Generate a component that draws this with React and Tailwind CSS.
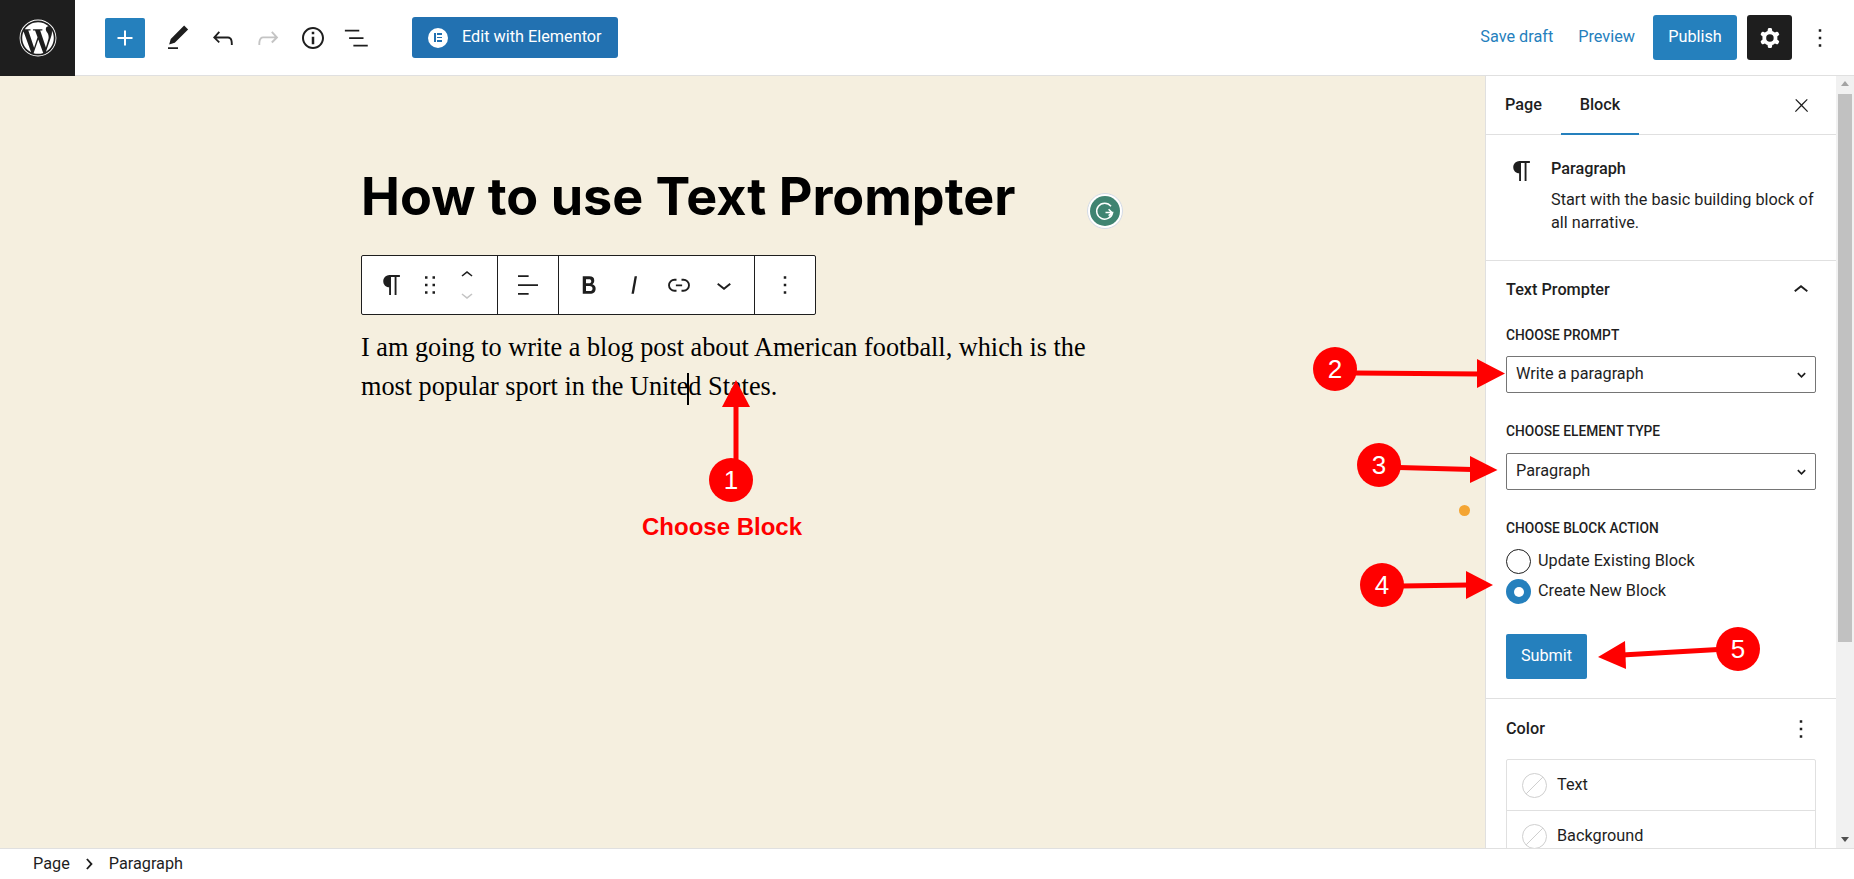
import React from "react";
import { FaWordpress } from "react-icons/fa";

const P = {
  plus: "M18 11.2h-5.2V6h-1.6v5.2H6v1.6h5.2V18h1.6v-5.2H18z",
  edit: "M20.1 5.1L16.9 2 6.2 12.7l-1.3 4.4 4.5-1.3L20.1 5.1zM4 20.8h8v-1.5H4v1.5z",
  undo: "M18.3 11.7c-.6-.6-1.4-.9-2.3-.9H6.7l2.9-3.3-1.1-1-4.5 5L8.5 16l1-1-2.7-2.7H16c.5 0 .9.2 1.3.5 1 1 1 3.4 1 4.5v.3h1.5v-.2c0-1.5 0-4.3-1.5-5.7z",
  redo: "M15.6 6.5l-1.1 1 2.9 3.3H8c-.9 0-1.7.3-2.3.9-1.4 1.5-1.4 4.2-1.4 5.6v.2h1.5v-.3c0-1.1 0-3.5 1-4.5.3-.3.7-.5 1.3-.5h9.2L14.5 15l1.1 1.1 4.6-4.6-4.6-5z",
  info: "M12 3.2c-4.8 0-8.8 3.9-8.8 8.8 0 4.8 3.9 8.8 8.8 8.8 4.8 0 8.8-3.9 8.8-8.8 0-4.8-4-8.8-8.8-8.8zm0 16c-4 0-7.2-3.3-7.2-7.2C4.8 8 8 4.8 12 4.8s7.2 3.3 7.2 7.2c0 4-3.2 7.2-7.2 7.2zM11 17h2v-6h-2v6zm0-8h2V7h-2v2z",
  list: "M1.5 5.3h11.5v1.5H1.5zM4.9 11.3h11.5v1.5H4.9zM8.3 17.3h11.5v1.5H8.3z",
  cog: "M10.289 4.836A1 1 0 0111.275 4h1.306a1 1 0 01.987.836l.244 1.466c.787.26 1.503.679 2.108 1.218l1.393-.522a1 1 0 011.216.437l.653 1.13a1 1 0 01-.23 1.273l-1.148.944a6.025 6.025 0 010 2.435l1.149.946a1 1 0 01.23 1.272l-.653 1.13a1 1 0 01-1.216.437l-1.394-.522c-.605.54-1.32.958-2.108 1.218l-.244 1.466a1 1 0 01-.987.836h-1.306a1 1 0 01-.986-.836l-.244-1.466a5.995 5.995 0 01-2.108-1.218l-1.394.522a1 1 0 01-1.217-.436l-.653-1.131a1 1 0 01.23-1.272l1.149-.946a6.026 6.026 0 010-2.435l-1.148-.944a1 1 0 01-.23-1.272l.653-1.131a1 1 0 011.217-.437l1.393.522a5.994 5.994 0 012.108-1.218l.244-1.466zM14.929 12a3 3 0 11-6 0 3 3 0 016 0z",
  more: "M13 19h-2v-2h2v2zm0-6h-2v-2h2v2zm0-6h-2V5h2v2z",
  close: "M13 11.8l6.1-6.3-1-1-6.1 6.2-6.1-6.2-1 1 6.1 6.3-6.5 6.7 1 1 6.5-6.6 6.5 6.6 1-1z",
  para: "M18.3 4H9.9v-.1l-.9.2c-2.3.4-4 2.4-4 4.8s1.7 4.4 4 4.8l.7.1V20h1.5V5.5h2.9V20h1.5V5.5h2.7V4z",
  drag: "M8 7h2V5H8v2zm0 6h2v-2H8v2zm0 6h2v-2H8v2zm6-14v2h2V5h-2zm0 8h2v-2h-2v2zm0 6h2v-2h-2v2z",
  up: "M6.5 12.4L12 8l5.5 4.4-.9 1.2L12 10l-4.5 3.6-1-1.2z",
  down: "M17.5 11.6L12 16l-5.5-4.4.9-1.2L12 14l4.5-3.6 1 1.2z",
  align: "M4 19.8h8.5v-1.5H4v1.5zm8.5-15.6H4v1.5h8.5V4.2zM4 12.8h16v-1.5H4v1.5z",
  bold: "M14.7 11.3c1-.6 1.5-1.6 1.5-3 0-2.3-1.3-3.4-4-3.4H7v14h5.8c1.4 0 2.5-.3 3.3-1 .8-.7 1.2-1.7 1.2-2.9.1-1.9-.8-3.1-2.6-3.7zm-5.1-4h2.3c.6 0 1.1.1 1.4.4.3.3.5.7.5 1.2s-.2 1-.5 1.2c-.3.3-.8.4-1.4.4H9.6V7.3zm4.6 9c-.4.3-1 .4-1.7.4H9.6v-3.9h2.9c.7 0 1.3.2 1.7.5.4.3.6.8.6 1.5s-.2 1.2-.6 1.5z",
  italic: "M12.5 5L10 19h1.9l2.5-14z",
  link: "M10 17.389H8.444A5.194 5.194 0 1 1 8.444 7H10v1.5H8.444a3.694 3.694 0 0 0 0 7.389H10v1.5ZM14 7h1.556a5.194 5.194 0 0 1 0 10.39H14v-1.5h1.556a3.694 3.694 0 0 0 0-7.39H14V7Zm-4.5 6h5v-1.5h-5V13Z",
  right: "M9.6 6.4 8.2 7.6 12.2 12l-4 4.4 1.4 1.2L14.7 12z",
};

function I({ d, className = "w-[30px] h-[30px]", evenodd }) {
  return (
    <svg viewBox="0 0 24 24" className={`${className} shrink-0 fill-current`}>
      <path d={d} fillRule={evenodd ? "evenodd" : undefined} clipRule={evenodd ? "evenodd" : undefined} />
    </svg>
  );
}

function ToolBtn({ d, muted, className = "" }) {
  return (
    <button className={`w-[45px] h-[45px] flex items-center justify-center ${muted ? "text-[#c4c4c4]" : "text-[#1e1e1e]"} ${className}`}>
      <I d={d} />
    </button>
  );
}

function TopBar() {
  return (
    <header className="h-[76px] shrink-0 flex items-center bg-white border-b border-[#e0e0e0]">
      <div className="w-[75px] h-[76px] -mb-px bg-[#1e1e1e] flex items-center justify-center text-white shrink-0">
        <FaWordpress className="w-[38px] h-[38px]" />
      </div>
      <div className="flex items-center ml-[30px]">
        <button className="w-[40px] h-[40px] rounded-[2px] bg-[#2580bd] text-white flex items-center justify-center">
          <I d={P.plus} />
        </button>
        <div className="flex items-center ml-[10px]">
          <ToolBtn d={P.edit} />
          <ToolBtn d={P.undo} />
          <ToolBtn d={P.redo} muted />
          <ToolBtn d={P.info} />
          <ToolBtn d={P.list} />
        </div>
        <button className="ml-[32px] w-[206px] h-[41px] rounded-[3px] bg-[#2271b1] text-white flex items-center pl-[16px] text-[16.25px]">
          <span className="w-[20px] h-[20px] rounded-full bg-white flex items-center justify-center gap-[1.5px] mr-[14px]">
            <span className="w-[2px] h-[9px] bg-[#2271b1]" />
            <span className="flex flex-col justify-between h-[9px] w-[5px]">
              <span className="h-[1.6px] bg-[#2271b1]" />
              <span className="h-[1.6px] bg-[#2271b1]" />
              <span className="h-[1.6px] bg-[#2271b1]" />
            </span>
          </span>
          Edit with Elementor
        </button>
      </div>
      <div className="ml-auto flex items-center pr-[12px] text-[16.25px]">
        <button className="text-[#2580bd]">Save draft</button>
        <button className="text-[#2580bd] ml-[25px]">Preview</button>
        <button className="ml-[18px] w-[84px] h-[45px] rounded-[3px] bg-[#2580bd] text-white">Publish</button>
        <button className="ml-[10px] w-[45px] h-[45px] rounded-[3px] bg-[#1e1e1e] text-white flex items-center justify-center">
          <I d={P.cog} evenodd />
        </button>
        <button className="ml-[5px] w-[45px] h-[45px] flex items-center justify-center text-[#1e1e1e]">
          <I d={P.more} />
        </button>
      </div>
    </header>
  );
}

function BlockToolbar() {
  return (
    <div className="mt-[23px] w-[455px] h-[60px] flex bg-white border border-[#1e1e1e] rounded-[2px] text-[#1e1e1e]">
      <div className="flex items-center w-[136px] pl-[7px] border-r border-[#1e1e1e]">
        <ToolBtn d={P.para} />
        <I d={P.drag} className="w-[30px] h-[30px] ml-[1px]" />
        <div className="ml-[7px] w-[30px] flex flex-col items-center">
          <I d={P.up} className="w-[30px] h-[24px]" />
          <span className="text-[#c4c4c4] -mt-[4px]"><I d={P.down} className="w-[30px] h-[24px]" /></span>
        </div>
      </div>
      <div className="flex items-center justify-center w-[61px] border-r border-[#1e1e1e]">
        <I d={P.align} />
      </div>
      <div className="flex items-center w-[196px] pl-[7px] border-r border-[#1e1e1e]">
        <ToolBtn d={P.bold} />
        <ToolBtn d={P.italic} />
        <ToolBtn d={P.link} />
        <ToolBtn d={P.down} />
      </div>
      <div className="flex items-center justify-center flex-1">
        <I d={P.more} />
      </div>
    </div>
  );
}

function Canvas() {
  return (
    <main className="relative flex-1 bg-[#f5efdf] min-w-0">
      <div className="w-[763px] mx-auto pt-[86px]">
        <h1 className="text-[52.1px] leading-[70px] font-bold text-black [font-family:Inter,sans-serif]">How to use Text Prompter</h1>
        <BlockToolbar />
        <p className="mt-[13px] w-[740px] text-[26.25px] leading-[39px] text-black [font-family:'Liberation_Serif',serif]">
          I am going to write a blog post about American football, which is the most popular sport in the Unite
          <span className="inline-block w-[2px] h-[32px] -my-[6px] align-middle bg-black -mx-[1px]" />
          d States.
        </p>
      </div>
      <div className="absolute left-[1087px] top-[117px] w-[36px] h-[36px] rounded-full bg-white border border-[#d5dbe6] flex items-center justify-center">
        <svg viewBox="0 0 30 30" className="w-[30px] h-[30px]">
          <circle cx="15" cy="15" r="15" fill="#3f8471" />
          <path d="M21 10.2A8 8 0 1 0 22.6 16.5H15.5M18.6 13.2l3.6 3.4-3.6 3" fill="none" stroke="#fff" strokeWidth="1.5" />
        </svg>
      </div>
      <div className="absolute left-[1459px] top-[429px] w-[11px] h-[11px] rounded-full bg-[#f4a533]" />
    </main>
  );
}

function Label({ children, className = "" }) {
  return <div className={`text-[13.75px] leading-[18px] font-medium uppercase text-[#1e1e1e] ${className}`}>{children}</div>;
}

function Select({ value, className = "mt-[12px]" }) {
  return (
    <div className={`relative w-[310px] h-[37px] ${className}`}>
      <select defaultValue={value} className="w-full h-full appearance-none rounded-[2px] border border-[#757575] bg-white pl-[9px] text-[16.25px] text-[#1e1e1e] [font-family:Roboto,sans-serif]">
        <option>{value}</option>
      </select>
      <svg viewBox="0 0 12 12" className="absolute right-[9px] top-[13px] w-[11px] h-[11px] fill-none stroke-[#1e1e1e] stroke-[1.8] pointer-events-none">
        <path d="M2 4.5 6 8.5 10 4.5" />
      </svg>
    </div>
  );
}

function Radio({ label, checked }) {
  return (
    <label className="flex items-center h-[25px] text-[16.25px] text-[#1e1e1e]">
      {checked ? (
        <span className="w-[25px] h-[25px] rounded-full bg-[#2580bd] flex items-center justify-center">
          <span className="w-[10px] h-[10px] rounded-full bg-white" />
        </span>
      ) : (
        <span className="w-[25px] h-[25px] rounded-full border border-[#1e1e1e] bg-white" />
      )}
      <span className="ml-[7px]">{label}</span>
    </label>
  );
}

function ColorRow({ label, last }) {
  return (
    <div className={`flex items-center h-[51px] pl-[15px] ${last ? "" : "border-b border-[#e0e0e0]"}`}>
      <svg viewBox="0 0 25 25" className="w-[25px] h-[25px] shrink-0">
        <circle cx="12.5" cy="12.5" r="12" fill="#fff" stroke="#cfcfcf" />
        <path d="M4.2 20.8 20.8 4.2" stroke="#cfcfcf" />
      </svg>
      <span className="ml-[10px] text-[16.25px] text-[#1e1e1e]">{label}</span>
    </div>
  );
}

function Sidebar() {
  return (
    <aside className="w-[369px] shrink-0 flex overflow-hidden bg-white">
      <div className="w-[351px] border-l border-[#e0e0e0] flex flex-col overflow-hidden text-[#1e1e1e]">
        <div className="h-[59px] shrink-0 flex items-stretch border-b border-[#e0e0e0] relative">
          <button className="w-[75px] text-[16.25px] font-medium">Page</button>
          <button className="w-[78px] text-[16.25px] font-medium relative">
            Block
            <span className="absolute left-0 right-0 -bottom-px h-[2px] bg-[#2580bd]" />
          </button>
          <div className="ml-auto mr-[24px] self-center"><I d={P.close} className="w-[21px] h-[21px]" /></div>
        </div>
        <div className="h-[126px] shrink-0 flex border-b border-[#e0e0e0] pt-[20px] pl-[21px]">
          <I d={P.para} className="w-[30px] h-[30px] mt-[1px]" />
          <div className="ml-[14px] w-[270px]">
            <div className="text-[16.25px] leading-[22px] font-medium mt-[3px]">Paragraph</div>
            <div className="text-[16.25px] leading-[23px] mt-[8px]">Start with the basic building block of all narrative.</div>
          </div>
        </div>
        <section className="shrink-0 border-b border-[#e0e0e0] px-[20px] pb-[19px]">
          <div className="flex items-center justify-between h-[58px]">
            <span className="text-[16.25px] font-medium">Text Prompter</span>
            <I d={P.up} />
          </div>
          <Label className="mt-[7px]">Choose prompt</Label>
          <Select value="Write a paragraph" />
          <Label className="mt-[29px]">Choose element type</Label>
          <Select value="Paragraph" className="mt-[13px]" />
          <Label className="mt-[29px]">Choose block action</Label>
          <div className="mt-[12px] flex flex-col gap-[5px]">
            <Radio label="Update Existing Block" />
            <Radio label="Create New Block" checked />
          </div>
          <button className="mt-[30px] block w-[81px] h-[45px] rounded-[2px] bg-[#2580bd] text-white text-[16.25px]">Submit</button>
        </section>
        <section className="px-[20px]">
          <div className="flex items-center justify-between h-[60px]">
            <span className="text-[16.25px] font-medium">Color</span>
            <I d={P.more} />
          </div>
          <div className="border border-[#e0e0e0] rounded-[2px] w-[310px] h-[110px] overflow-hidden">
            <ColorRow label="Text" />
            <ColorRow label="Background" last />
          </div>
        </section>
      </div>
      <div className="w-[18px] bg-[#f1f1f1] flex flex-col items-center relative">
        <span className="mt-[5px] w-0 h-0 border-x-[4px] border-x-transparent border-b-[5px] border-b-[#a3a3a3]" />
        <div className="mt-[8px] w-[14px] h-[548px] bg-[#c1c1c1]" />
        <span className="mt-auto mb-[6px] w-0 h-0 border-x-[4px] border-x-transparent border-t-[5px] border-t-[#505050]" />
      </div>
    </aside>
  );
}

function Badge({ n, x, y }) {
  return (
    <div style={{ left: x - 22, top: y - 22 }} className="absolute w-[44px] h-[44px] rounded-full bg-[#ff0000] flex items-center justify-center text-white text-[26px] [font-family:'Liberation_Sans',sans-serif]">
      {n}
    </div>
  );
}

function Annotations() {
  return (
    <div className="absolute inset-0 pointer-events-none">
      <svg width="1854" height="879" className="absolute inset-0" fill="#ff0000" stroke="none">
        <path d="M736 460V400" stroke="#ff0000" strokeWidth="5" />
        <path d="M736 380 750 407H722Z" />
        <path d="M1355 373 1480 374" stroke="#ff0000" strokeWidth="5" />
        <path d="M1505 373.5 1477 359V388Z" />
        <path d="M1399 467.5 1472 469.5" stroke="#ff0000" strokeWidth="5" />
        <path d="M1497.5 470 1470 456V483Z" />
        <path d="M1402 586 1468 585" stroke="#ff0000" strokeWidth="5" />
        <path d="M1493 585 1466 571V599Z" />
        <path d="M1718 649.5 1622 655" stroke="#ff0000" strokeWidth="5" />
        <path d="M1598 657 1625 641 1626 669Z" />
      </svg>
      <Badge n="1" x={731} y={480} />
      <Badge n="2" x={1335} y={369} />
      <Badge n="3" x={1379} y={465} />
      <Badge n="4" x={1382} y={585} />
      <Badge n="5" x={1738} y={649} />
      <div className="absolute left-[642px] top-[512px] text-[24px] leading-[30px] font-bold text-[#ff0000] [font-family:'Liberation_Sans',sans-serif]">Choose Block</div>
    </div>
  );
}

export default function App() {
  return (
    <div className="relative w-[1854px] h-[879px] overflow-hidden flex flex-col bg-white [font-family:Roboto,sans-serif]">
      <TopBar />
      <div className="flex-1 min-h-0 flex">
        <Canvas />
        <Sidebar />
      </div>
      <footer className="h-[31px] shrink-0 bg-white border-t border-[#e0e0e0] flex items-center pl-[33px] text-[16.25px] text-[#1e1e1e]">
        <span>Page</span>
        <I d={P.right} className="w-[24px] h-[24px] ml-[8px] mr-[7px]" />
        <span>Paragraph</span>
      </footer>
      <Annotations />
    </div>
  );
}
